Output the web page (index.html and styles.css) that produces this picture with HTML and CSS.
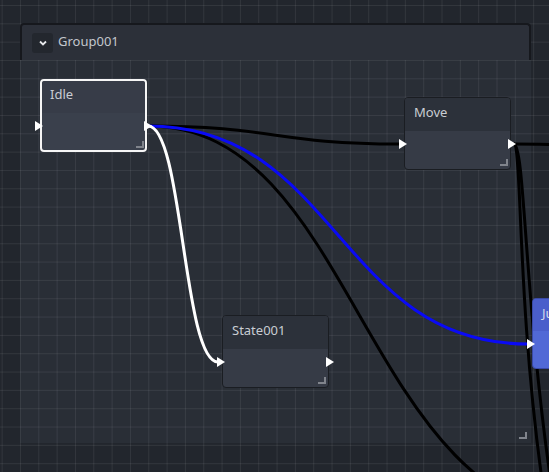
FILE: index.html
```html
<!DOCTYPE html>
<html>
<head>
<meta charset="utf-8">
<link rel="stylesheet" href="styles.css">
</head>
<body>
<div class="canvas">
  <div class="group">
    <div class="group-header">
      <div class="collapse">
        <svg width="8" height="6" viewBox="0 0 8 6"><polyline points="1,1.5 4,4.5 7,1.5" fill="none" stroke="#e6e8eb" stroke-width="1.8"/></svg>
      </div>
      <span class="group-title">Group001</span>
    </div>
    <div class="group-body">
      <div class="handle group-handle"></div>
    </div>
  </div>

  <svg class="wires" width="549" height="472" viewBox="0 0 549 472">
    <path d="M148,126 C360,126 361,520 600,520" stroke="#000" />
    <path d="M148,126 C274,126 274,144 400,144" stroke="#000" />
    <path d="M514,144 C600,144 660,150 760,150" stroke="#000" />
    <path d="M514,144 C522,146 517,300 542,480" stroke="#000" />
    <path d="M514,144 C525,146 524,300 552,490" stroke="#000" />
    <path d="M148,126 C338,126 338,344 528,344" stroke="#0a0af5" />
    <path d="M148,126 C183,126 183,362 218,362" stroke="#fff" />
  </svg>

  <div class="node selected idle">
    <div class="node-header">Idle</div>
    <div class="node-body"></div>
    <div class="port in"></div>
    <div class="port out"></div>
    <div class="handle"></div>
  </div>

  <div class="node move">
    <div class="node-header">Move</div>
    <div class="node-body"></div>
    <div class="port in"></div>
    <div class="port out"></div>
    <div class="handle"></div>
  </div>

  <div class="node state">
    <div class="node-header">State001</div>
    <div class="node-body"></div>
    <div class="port in"></div>
    <div class="port out"></div>
    <div class="handle"></div>
  </div>

  <div class="node jump">
    <div class="node-header">Jump</div>
    <div class="node-body"></div>
    <div class="port in"></div>
  </div>
</div>
</body>
</html>
```

FILE: styles.css
```css
html, body {
  margin: 0;
  padding: 0;
  background: #22262d;
}

.canvas {
  position: relative;
  width: 549px;
  height: 472px;
  overflow: hidden;
  background-color: #22262d;
  background-image:
    linear-gradient(to right, rgba(255,255,255,0.075) 1px, transparent 1px),
    linear-gradient(to bottom, rgba(255,255,255,0.075) 1px, transparent 1px);
  background-size: 18.33px 18.33px;
  background-position: 1.67px 5px;
  font-family: "Noto Sans", "Open Sans", sans-serif;
  font-size: 13px;
}

/* group frame */
.group {
  position: absolute;
  left: 20px;
  top: 23px;
  width: 511px;
  height: 420px;
  display: flex;
  flex-direction: column;
}

.group-header {
  height: 37px;
  box-sizing: border-box;
  border: 2px solid #16181d;
  border-bottom: none;
  border-radius: 4px 4px 0 0;
  background: #2c3039;
  display: flex;
  align-items: center;
  padding-left: 10px;
  gap: 5px;
}

.collapse {
  width: 21px;
  height: 20px;
  border-radius: 3px;
  background: #23272e;
  display: flex;
  align-items: center;
  justify-content: center;
}

.group-title {
  color: #c3c7cd;
  line-height: 18px;
  margin-top: -3px;
}

.group-body {
  flex: 1;
  position: relative;
  background: rgba(140, 150, 180, 0.07);
}

/* connections */
.wires {
  position: absolute;
  left: 0;
  top: 0;
}

.wires path {
  fill: none;
  stroke-width: 3;
}

/* nodes */
.node {
  position: absolute;
  width: 107px;
  height: 73px;
  box-sizing: border-box;
  border: 1px solid #1a1d22;
  border-radius: 4px;
  background: #363b46;
  display: flex;
  flex-direction: column;
}

.node-header {
  height: 33px;
  flex: none;
  box-sizing: border-box;
  padding: 5px 0 0 9px;
  background: #2c313a;
  border-radius: 3px 3px 0 0;
  color: #c9cdd3;
  line-height: 18px;
  white-space: nowrap;
}

.node-body {
  flex: 1;
}

.node.selected {
  border: 2px solid #f6f6f6;
  background: #3a404c;
}

.node.selected .node-header {
  height: 32px;
  padding: 4px 0 0 8px;
  background: #373c48;
}

.idle { left: 40px; top: 79px; }
.move { left: 404px; top: 97px; }
.state { left: 222px; top: 315px; }

.jump {
  left: 532px;
  top: 298px;
  height: 71px;
  border-color: #3a4aa6;
  background: #5169d6;
}

.jump .node-header {
  height: 32px;
  background: #4a5ecb;
  color: #d3d7ea;
}

/* ports */
.port {
  position: absolute;
  top: 41px;
  width: 0;
  height: 0;
  border-top: 5px solid transparent;
  border-bottom: 5px solid transparent;
  border-left: 8px solid #ffffff;
}

.port.in { left: -6px; }
.port.out { right: -6px; }

.node.selected .port { top: 40px; }
.node.selected .port.in { left: -7px; }
.node.selected .port.out { right: -7px; }

.jump .port { top: 40px; }

/* resize handles */
.handle {
  position: absolute;
  right: 2px;
  bottom: 3px;
  width: 6px;
  height: 5px;
  border-right: 2px solid #80848c;
  border-bottom: 2px solid #80848c;
}

.node.selected .handle {
  right: 1px;
  bottom: 2px;
}

.group-handle {
  right: 4px;
  bottom: 4px;
}
```
